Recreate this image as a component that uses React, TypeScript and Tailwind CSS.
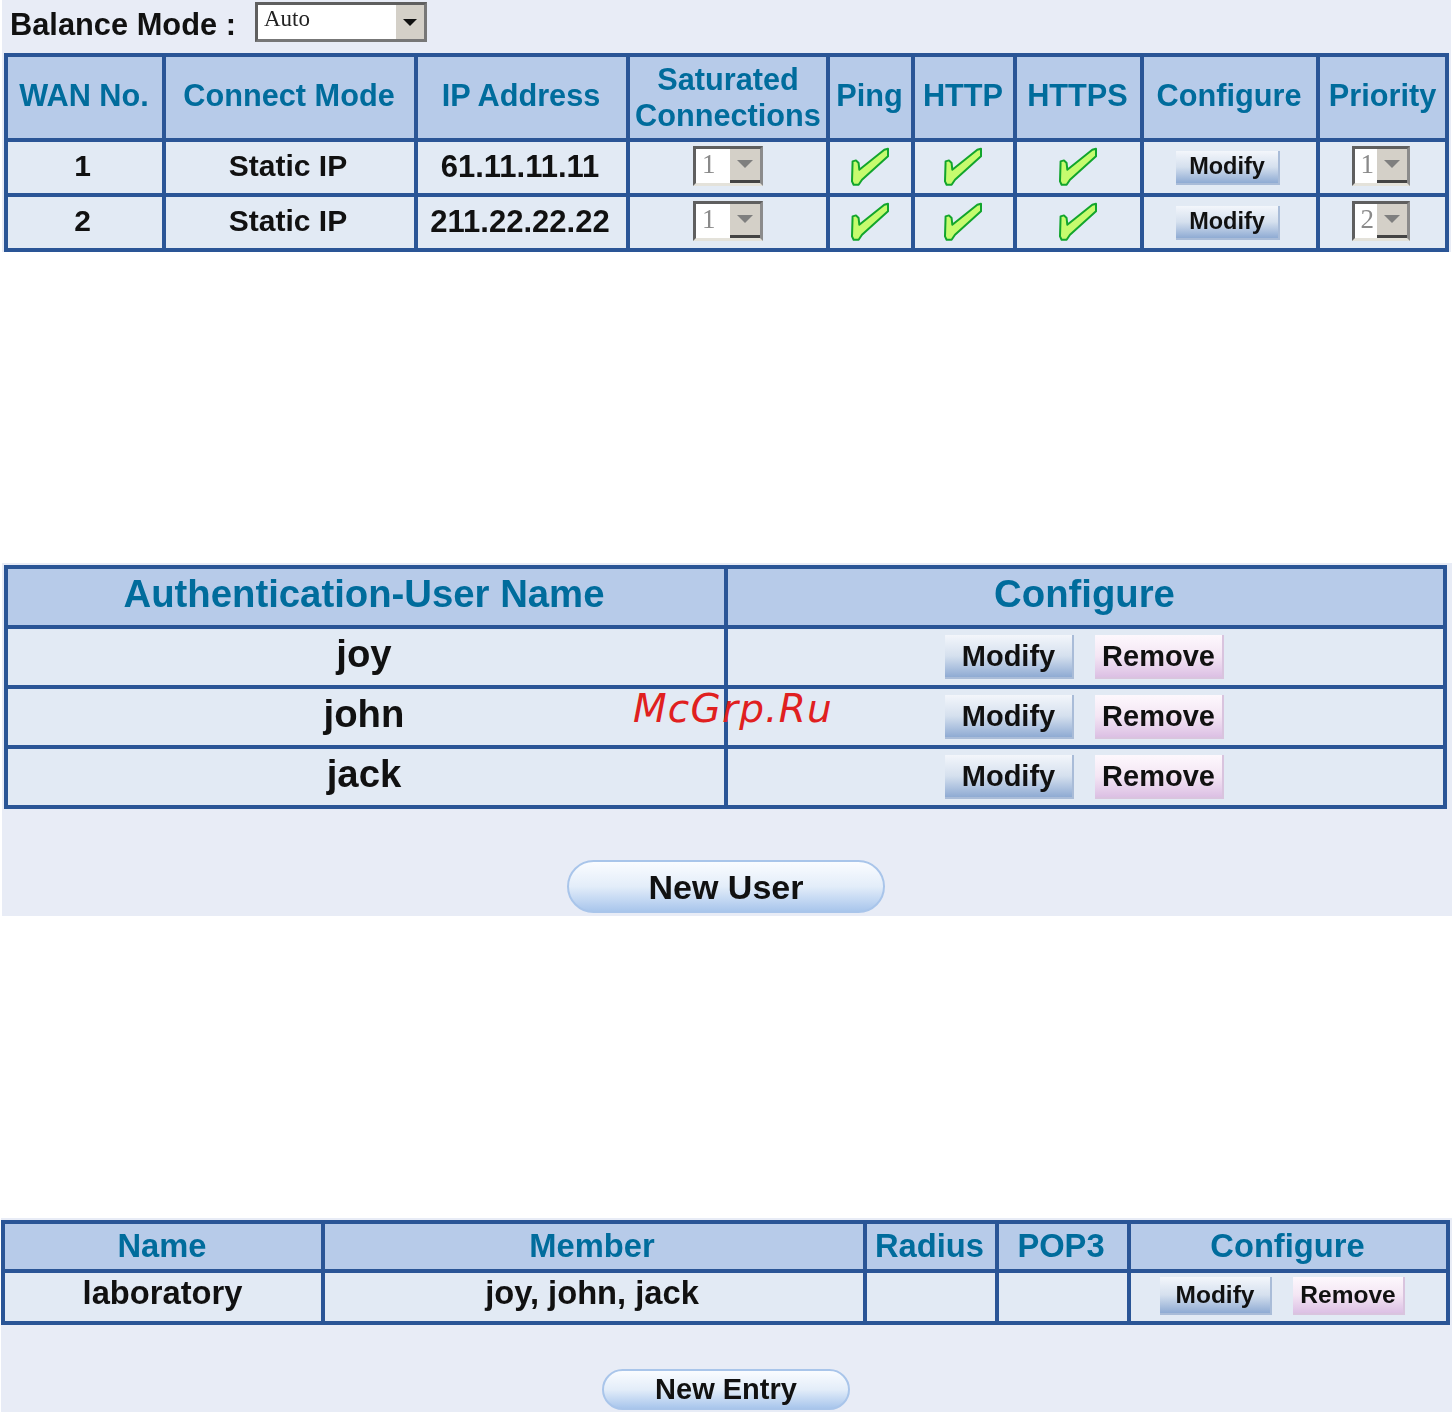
import { ReactNode } from 'react';

const Check = () => (
  <svg width="40" height="40" viewBox="0 0 40 40" className="inline-block mb-[4px]">
    <path
      d="M1.6 15.4 L5 14.4 L7.6 17 L8.3 23.7 L33.3 3.7 L37 2.7 L37 10.3 L11 33.7 L7.6 38.7 L2.6 38.7 L1 35.4 Z"
      fill="#c6fb6e"
      stroke="#12a52c"
      strokeWidth="2"
      strokeLinejoin="round"
    />
  </svg>
);

const SmallSelect = ({ value, w }: { value: string; w: string }) => (
  <div className={`${w} inline-flex h-[40px] align-middle mb-[4px] bg-white border-[3px] border-[#5f5f5f] border-r-[#8b8b8b] border-b-[#e4e2da]`}>
    <span className="flex-1 pl-[6px] text-left font-['Liberation_Serif',serif] text-[27px] leading-[30px] text-[#8a8a8a] font-normal">{value}</span>
    <span className="w-[30px] flex items-center justify-center bg-[#d4d0c8] border-b-[3px] border-[#444]">
      <span className="w-0 h-0 border-x-[8px] border-x-transparent border-t-[8px] border-t-[#7f7f7f]" />
    </span>
  </div>
);

const Btn = ({ label, kind, w, h, text }: { label: string; kind: 'blue' | 'pink'; w: string; h: string; text: string }) => (
  <button
    className={`${w} ${h} ${text} ${
      kind === 'blue'
        ? 'bg-gradient-to-b from-[#f3f6fb] via-[#d5e0ee] to-[#8fabd3] border-[#a9bcd8]'
        : 'bg-gradient-to-b from-[#fdf8fd] via-[#f4e6f4] to-[#dcc0e4] border-[#d9c4de]'
    } border-r-2 border-b-2 font-bold text-[#111] leading-none`}
  >
    {label}
  </button>
);

const Pill = ({ label, w, h, text }: { label: string; w: string; h: string; text: string }) => (
  <button className={`${w} ${h} ${text} rounded-full border-2 border-[#a9c5ea] bg-gradient-to-b from-[#fafcff] via-[#e3edf9] to-[#a9c6ec] font-bold text-[#111] leading-none`}>
    {label}
  </button>
);

const Th = ({ children, className }: { children: ReactNode; className?: string }) => (
  <th className={`border-[4px] border-[#2a5596] bg-[#b7cbe9] text-[#006c9c] font-bold text-center align-middle p-0 ${className ?? ''}`}>{children}</th>
);

const Td = ({ children, className }: { children?: ReactNode; className?: string }) => (
  <td className={`border-[4px] border-[#2a5596] bg-[#e2eaf4] text-[#111] font-bold text-center align-middle p-0 ${className ?? ''}`}>{children}</td>
);

const wanRows = [
  { no: '1', ip: '61.11.11.11', sat: '1', pri: '1' },
  { no: '2', ip: '211.22.22.22', sat: '1', pri: '2' },
];

const users = ['joy', 'john', 'jack'];

export default function App() {
  return (
    <div className="relative w-[1452px] h-[1412px] bg-white overflow-hidden flex flex-col font-['Liberation_Sans',Arial,sans-serif]">
      <section className="ml-[2px] mr-[1px] h-[252px] bg-[#e8ecf6] [filter:blur(0.5px)]">
        <div className="h-[53px] flex items-start pl-[8px]">
          <span className="text-[30.8px] font-bold leading-[50px] text-[#111] w-[245px]">Balance Mode :</span>
          <div className="mt-[2px] w-[172px] h-[40px] flex bg-white border-[3px] border-[#5f5f5f] border-r-[#777] border-b-[#777]">
            <span className="flex-1 pl-[6px] font-['Liberation_Serif',serif] text-[23px] leading-[28px] text-[#222]">Auto</span>
            <span className="w-[30px] flex items-center justify-center bg-[#d4d0c8] border-l-2 border-white">
              <span className="w-0 h-0 border-x-[7px] border-x-transparent border-t-[7px] border-t-[#111]" />
            </span>
          </div>
        </div>
        <table className="ml-[2px] w-[1445px] table-fixed border-collapse">
          <colgroup>
            <col className="w-[158px]" />
            <col className="w-[252px]" />
            <col className="w-[212px]" />
            <col className="w-[200px]" />
            <col className="w-[85px]" />
            <col className="w-[102px]" />
            <col className="w-[127px]" />
            <col className="w-[176px]" />
            <col />
          </colgroup>
          <thead>
            <tr className="h-[85px] text-[30.7px] leading-[36px]">
              <Th className="pb-[4px] pr-[2px]">WAN No.</Th>
              <Th className="pb-[4px] pr-[2px]">Connect Mode</Th>
              <Th className="pb-[4px] pr-[2px]">IP Address</Th>
              <Th>Saturated Connections</Th>
              <Th className="pb-[4px] pr-[2px]">Ping</Th>
              <Th className="pb-[4px] pr-[2px]">HTTP</Th>
              <Th className="pb-[4px] pr-[2px]">HTTPS</Th>
              <Th className="pb-[4px] pr-[2px]">Configure</Th>
              <Th className="pb-[4px]">Priority</Th>
            </tr>
          </thead>
          <tbody>
            {wanRows.map((r) => (
              <tr key={r.no} className="h-[55px] text-[30px] leading-none">
                <Td className="pr-[5px] pb-[3px]">{r.no}</Td>
                <Td className="pr-[4px] pb-[3px]">Static IP</Td>
                <Td className="pr-[4px] pb-[3px] text-[31px]">{r.ip}</Td>
                <Td><SmallSelect value={r.sat} w="w-[70px]" /></Td>
                <Td><Check /></Td>
                <Td><Check /></Td>
                <Td><Check /></Td>
                <Td className="pr-[4px] pb-[1px]"><Btn label="Modify" kind="blue" w="w-[104px]" h="h-[34px]" text="text-[23.5px]" /></Td>
                <Td className="pr-[4px]"><SmallSelect value={r.pri} w="w-[58px]" /></Td>
              </tr>
            ))}
          </tbody>
        </table>
      </section>

      <section className="mt-[311px] ml-[2px] h-[353px] bg-[#e8ecf6] pt-[2px] [filter:blur(0.5px)]">
        <table className="ml-[2px] w-[1443px] table-fixed border-collapse">
          <colgroup>
            <col className="w-[720px]" />
            <col />
          </colgroup>
          <thead>
            <tr className="h-[60px] text-[38.3px] leading-none">
              <Th className="pb-[6px] pr-[4px]">Authentication-User Name</Th>
              <Th className="pb-[6px] pr-[2px]">Configure</Th>
            </tr>
          </thead>
          <tbody>
            {users.map((u) => (
              <tr key={u} className="h-[60px] text-[38.3px] leading-none">
                <Td className="pb-[5px] pr-[4px]">{u}</Td>
                <Td>
                  <div className="flex items-center justify-center gap-[21px] pr-[2px]">
                    <Btn label="Modify" kind="blue" w="w-[129px]" h="h-[44px]" text="text-[29px]" />
                    <Btn label="Remove" kind="pink" w="w-[129px]" h="h-[44px]" text="text-[29px]" />
                  </div>
                </Td>
              </tr>
            ))}
          </tbody>
        </table>
        <div className="mt-[51px] ml-[565px]">
          <Pill label="New User" w="w-[318px]" h="h-[53px]" text="text-[34px]" />
        </div>
      </section>

      <section className="mt-[302px] ml-[1px] flex-1 bg-[#e8ecf6] pt-[2px] [filter:blur(0.5px)]">
        <table className="w-[1449px] table-fixed border-collapse">
          <colgroup>
            <col className="w-[320px]" />
            <col className="w-[542px]" />
            <col className="w-[132px]" />
            <col className="w-[132px]" />
            <col />
          </colgroup>
          <thead>
            <tr className="h-[49px] text-[32.7px] leading-none">
              <Th className="pr-[2px]">Name</Th>
              <Th className="pr-[4px]">Member</Th>
              <Th className="pr-[3px]">Radius</Th>
              <Th className="pr-[4px]">POP3</Th>
              <Th className="pr-[2px]">Configure</Th>
            </tr>
          </thead>
          <tbody>
            <tr className="h-[52px] text-[32.7px] leading-none">
              <Td className="pb-[7px] pr-[1px]">laboratory</Td>
              <Td className="pb-[7px] pr-[4px]">joy, john, jack</Td>
              <Td />
              <Td />
              <Td className="pb-[2px]">
                <div className="flex items-center justify-center gap-[21px] pr-[12px]">
                  <Btn label="Modify" kind="blue" w="w-[112px]" h="h-[38px]" text="text-[24.5px]" />
                  <Btn label="Remove" kind="pink" w="w-[112px]" h="h-[38px]" text="text-[24.5px]" />
                </div>
              </Td>
            </tr>
          </tbody>
        </table>
        <div className="mt-[44px] ml-[601px]">
          <Pill label="New Entry" w="w-[248px]" h="h-[41px]" text="text-[29px]" />
        </div>
      </section>

      <span className="absolute left-[633px] top-[684px] font-['DejaVu_Sans',sans-serif] italic text-[39px] tracking-[1.2px] leading-[50px] text-[#e02020]">McGrp.Ru</span>
    </div>
  );
}
